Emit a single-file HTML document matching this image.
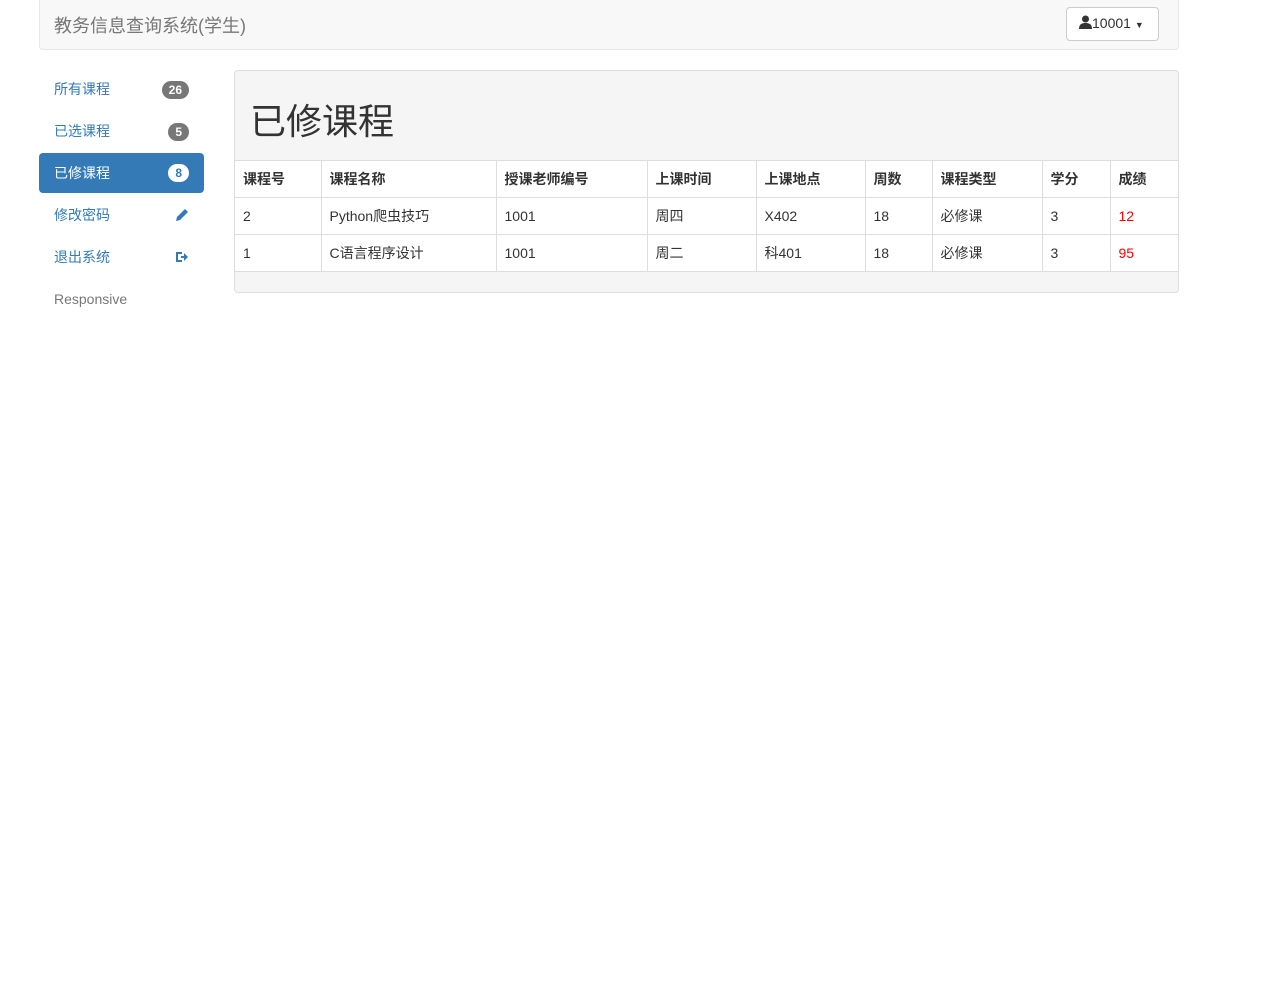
<!DOCTYPE html>
<html><head><meta charset="utf-8"><style>
*{box-sizing:border-box;margin:0;padding:0}
body{width:1271px;height:989px;background:#fff;font-family:"Liberation Sans","Noto Sans CJK SC",sans-serif;font-size:14px;color:#333;position:relative;overflow:hidden}
.nav{position:absolute;left:39px;top:-5px;width:1140px;height:55px;background:#f8f8f8;border:1px solid #e7e7e7;border-radius:4px}
.brand{position:absolute;left:14px;top:16px;font-size:18px;color:#777}
.btn{position:absolute;left:1026px;top:11px;width:93px;height:34px;border:1px solid #ccc;border-radius:4px;background:#fff;font-size:14px;color:#333;padding:7px 0 0 12px}
.side{position:absolute;left:39px;top:68px;width:165px}
.side div{height:42px;line-height:42px;padding-left:15px;color:#337ab7;font-size:14px;position:relative;border-radius:4px}
.side .act{background:#337ab7;color:#fff;height:40px;line-height:40px;margin:1px 0}
.badge{position:absolute;right:15px;top:13px;height:18px;line-height:18px;min-width:20px;padding:0 7px;border-radius:9px;background:#777;color:#fff;font-size:12px;font-weight:bold;text-align:center}
.act .badge{background:#fff;color:#337ab7;top:11px}
.panel{position:absolute;left:234px;top:70px;width:945px;height:223px;border:1px solid #ddd;border-radius:4px;background:#f5f5f5;overflow:hidden}
.panel h1{font-size:36px;font-weight:normal;height:89px;padding:28px 0 0 15px;line-height:46px;color:#333}
table{border-collapse:collapse;background:#fff;width:944px}
td,th{border:1px solid #ddd;height:37px;padding:0 8px;text-align:left;font-size:14px}
th{font-weight:bold}
tr td:first-child,tr th:first-child{border-left:0}
tr td:last-child,tr th:last-child{border-right:0}
.r{color:#f00}
</style></head><body>
<div class="nav"><div class="brand">教务信息查询系统(学生)</div>
<div class="btn"><svg width="13" height="14" viewBox="0 0 13 14" style="vertical-align:-1px"><circle cx="6.5" cy="4" r="3.5" fill="#333"/><path d="M0 14 C0 9 3 8 6.5 8 C10 8 13 9 13 14Z" fill="#333"/></svg>10001 <span style="font-size:9px">▼</span></div></div>
<div class="side">
<div>所有课程<span class="badge">26</span></div>
<div>已选课程<span class="badge">5</span></div>
<div class="act">已修课程<span class="badge">8</span></div>
<div>修改密码<svg style="position:absolute;right:15px;top:14px" width="14" height="14" viewBox="0 0 14 14"><path d="M1 13 L2 9 L10 1 L13 4 L5 12Z" fill="#337ab7"/></svg></div>
<div>退出系统<svg style="position:absolute;right:15px;top:14px" width="14" height="14" viewBox="0 0 14 14"><path d="M1 2 H7 V4 H3 V10 H7 V12 H1Z M6 6 H9 V3 L13 7 L9 11 V8 H6Z" fill="#337ab7"/></svg></div>
<div style="color:#777">Responsive</div>
</div>
<div class="panel"><h1>已修课程</h1>
<table>
<tr><th style="width:86px">课程号</th><th style="width:175px">课程名称</th><th style="width:151px">授课老师编号</th><th style="width:109px">上课时间</th><th style="width:109px">上课地点</th><th style="width:67px">周数</th><th style="width:110px">课程类型</th><th style="width:68px">学分</th><th>成绩</th></tr>
<tr><td>2</td><td>Python爬虫技巧</td><td>1001</td><td>周四</td><td>X402</td><td>18</td><td>必修课</td><td>3</td><td class="r">12</td></tr>
<tr><td>1</td><td>C语言程序设计</td><td>1001</td><td>周二</td><td>科401</td><td>18</td><td>必修课</td><td>3</td><td class="r">95</td></tr>
</table></div>
</body></html>
